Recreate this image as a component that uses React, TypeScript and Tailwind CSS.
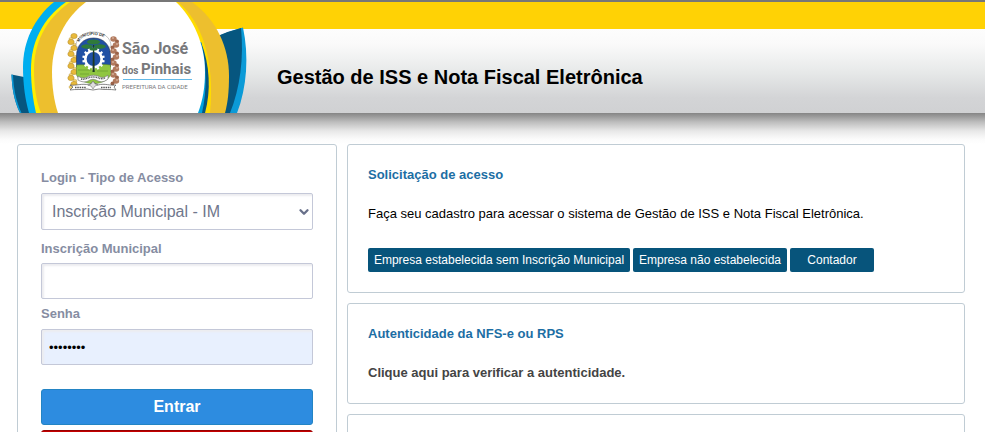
import React from "react";
import { ChevronDown } from "lucide-react";

const sans = "font-['Liberation_Sans',Arial,sans-serif]";

function Emblem() {
  const teeth = Array.from({ length: 14 }, (_, i) => (i * 360) / 14);
  const leaves = [36, 42, 48, 54, 60, 66, 72, 78, 84];
  return (
    <g>
      {leaves.map((y, i) => (
        <g key={y}>
          <ellipse cx={i % 2 ? 71 : 74} cy={y} rx="3.2" ry="2.6" fill="#e8b93a" stroke="#b08a34" strokeWidth=".5" />
          <ellipse cx={i % 2 ? 75 : 71} cy={y + 3} rx="2" ry="1.6" fill="#f3d36a" stroke="#b08a34" strokeWidth=".4" />
        </g>
      ))}
      {leaves.slice(0, 8).map((y, i) => (
        <g key={y}>
          <ellipse cx={i % 2 ? 116 : 113.5} cy={y + 3} rx="3.2" ry="2.8" fill="#b27a5e" />
          <circle cx={i % 2 ? 112.5 : 117} cy={y + 5.5} r="2" fill="#9a6248" />
          <circle cx={i % 2 ? 117 : 113} cy={y + 2} r=".8" fill="#e9cdbd" />
        </g>
      ))}
      <path d="M76 46c0-8 7-14 17.500-14S111 38 111 46l-3 2H79z" fill="#fff" stroke="#888" strokeWidth=".5" />
      <path d="M76.500 67V56c0-11 7-18 17-18s17 7 17 18v11z" fill="#2050a4" stroke="#24324d" strokeWidth=".6" />
      <path d="M76.500 65c7-1 12 1 17 0s11-1 17 0v10c-3 6-9 8-17 9-8-1-14-3-17-9z" fill="#8fc640" stroke="#527b2a" strokeWidth=".5" />
      <path d="M78 70h13M97 71h11M80 74h9" stroke="#679c31" strokeWidth=".7" />
      <path id="emblem-arc" d="M79 42c2-5 7-7 14.500-7s13 3 15 7" fill="none" />
      <text fontSize="4" fontWeight="700" fill="#333" className={sans}>
        <textPath href="#emblem-arc">MUNICÍPIO DE</textPath>
      </text>
      <circle cx="93.500" cy="59" r="8.200" fill="#2050a4" stroke="#fff" strokeWidth="2.600" />
      {teeth.map((a) => (
        <rect key={a} x="92.400" y="47.700" width="2.200" height="2.600" fill="#fff" transform={`rotate(${a} 93.5 59)`} />
      ))}
      <path d="M93 45h1.200l.5 27h-2.200z" fill="#1e3a22" />
      <g fill="#2f7a3a">
        <ellipse cx="93.500" cy="42" rx="6.500" ry="2.400" />
        <ellipse cx="87" cy="46.500" rx="5.800" ry="2.200" />
        <ellipse cx="100" cy="46.500" rx="5.800" ry="2.200" />
        <ellipse cx="93.500" cy="49" rx="4" ry="1.600" />
      </g>
      <path d="M78 76c4 3 8 2 11 0 3-1 6-1 9 0 3 2 7 2 10-1v4c-5 4-8 3-12 1-2-1-4-1-6 0-5 3-8 2-12 0z" fill="#fff" stroke="#777" strokeWidth=".7" />
      <path d="M81 79c5 1 6-2 12-2s7 3 12 1" fill="none" stroke="#555" strokeWidth="1.500" strokeDasharray="1 .7" />
      <path d="M70 85c6 1 12-2 19 0l4-3 5 3c7-2 12 1 18 0l-2 2 2 3c-6-1-12 0-17-1l-6 1-6-1c-5 1-11 0-17 1l3-3z" fill="#fff" stroke="#555" strokeWidth=".7" />
      <path d="M75 87.500h11M101 87.500h10" stroke="#555" strokeWidth="1.400" strokeDasharray="1.500 .8" />
      <path d="m93 81 2 3 3 1-3 1-2 3-2-3-3-1 3-1z" fill="#ddd" stroke="#666" strokeWidth=".5" />
    </g>
  );
}

function Brand() {
  return (
    <svg
      viewBox="0 2 250 111"
      role="img"
      aria-label="São José dos Pinhais - Prefeitura da Cidade"
      className="h-[111px] w-[250px] shrink-0"
    >
      <path d="M11.500 74.500 24 77 40 113H20C14 101 12 88 11.500 74.500z" fill="#06567f" />
      <path d="M11.500 74.500C12 88 14 101 20 113h1.500C16 101 13.500 88 13 75z" fill="#0b9ad7" />
      <path d="M54 2C34 18 23 42 23 67c0 17 2 32 6 46h51V2z" fill="#00aeef" />
      <path d="M214 38c10-5 19-7.500 29-10.500 6 28 4 60-6 85.500h-17z" fill="#0b9ad7" />
      <path d="M214 38c9-5 18-7.500 27-10 3 30-1 60-11 85h-10z" fill="#06567f" />
      <path d="M66 2C42 19 31 43 31 69c0 16 2 31 5 44h50V2z" fill="#ffee00" />
      <path d="M70 2C45 20 34 43 34 70c0 16 2 31 7 43h184c3-11 4-23 4-37 0-28-12-56-37-74z" fill="#edbf2e" />
      <path d="M174 2h4c24 20 37 58 32 111h-10z" fill="#ffdc00" />
      <path d="M201 42c9 23 10 49 4 71h-8V42z" fill="#06567f" />
      <path d="M201 42c6 22 6 49 1 71h-8V42z" fill="#00a4df" />
      <path d="M86 2C66 17 52 42 52 72c0 15 2 29 6 41h140c5-13 7-27 7-41 0-28-12-54-29-70z" fill="#fff" />
      <Emblem />
      <g fill="#77787b" className="font-[Roboto,sans-serif]">
        <text x="122" y="54" fontSize="16" fontWeight="700">São José</text>
        <text x="122" y="74" fontSize="10" fontWeight="700">dos</text>
        <text x="141" y="74" fontSize="15" fontWeight="700">Pinhais</text>
        <text x="122" y="89" fontSize="6">PREFEITURA DA CIDADE</text>
      </g>
      <path d="M123 79.500h69" stroke="#62b9e8" />
    </svg>
  );
}

const label = "block text-[13px] leading-4 font-bold text-[#868da2]";
const field =
  "block w-full rounded-xs border border-[#c4c8d8] text-[#000] shadow-[inset_2px_2px_2px_#ececf0] outline-none";

function Card({ children, className = "" }: { children?: React.ReactNode; className?: string }) {
  return <section className={`rounded-[3px] border border-[#c0ccd4] bg-white ${className}`}>{children}</section>;
}

function Action({ children, className = "" }: { children: React.ReactNode; className?: string }) {
  return (
    <button
      type="button"
      className={`h-6 rounded-xs bg-[#07547b] px-[5px] text-xs leading-6 whitespace-nowrap text-white ${className}`}
    >
      {children}
    </button>
  );
}

export default function App() {
  return (
    <div className={`h-screen overflow-hidden bg-white text-black ${sans}`}>
      <header className="border-t-2 border-[#777] bg-[linear-gradient(#ffd205_27px,#fdfdfd_27px,#fafafa_42px,#e7e9e9_70px,#d3d4d6_96px,#d0d1d3)]">
        <div className="flex items-start gap-[27px]">
          <Brand />
          <h1 className="pt-[63px] text-xl leading-6 font-bold">Gestão de ISS e Nota Fiscal Eletrônica</h1>
        </div>
      </header>
      <div className="h-[31px] bg-[linear-gradient(#858585,#bdbdbd_9px,#e8e8e8_18px,#fbfbfb_26px,#fff)]" />

      <main className="flex gap-[10px] pr-5 pl-[17px]">
        <Card className="w-80 shrink-0 px-[23px] pt-[25px] pb-8">
          <form onSubmit={(e) => e.preventDefault()}>
            <label htmlFor="tipo" className={label}>Login - Tipo de Acesso</label>
            <div className="relative mt-[7px]">
              <select
                id="tipo"
                className={`${field} h-[37px] appearance-none bg-white pl-[10px] text-base text-[#70778c]`}
              >
                <option>Inscrição Municipal - IM</option>
              </select>
              <ChevronDown
                size={14}
                strokeWidth={4}
                className="pointer-events-none absolute top-[12px] right-[2px] text-[#68708a]"
              />
            </div>
            <label htmlFor="inscricao" className={`${label} mt-[11px]`}>Inscrição Municipal</label>
            <input id="inscricao" type="text" className={`${field} mt-[6px] h-9 px-[7px] text-base`} />
            <label htmlFor="senha" className={`${label} mt-[7px]`}>Senha</label>
            <input
              id="senha"
              type="password"
              defaultValue="12345678"
              className={`${field} mt-[7px] h-9 bg-[#e8f0fe] px-[7px] text-[13px]`}
            />
            <button
              type="submit"
              className="mt-6 block h-9 w-full rounded-[3px] border border-[#2384c4] bg-[#2d8ce0] text-base font-bold text-white"
            >
              Entrar
            </button>
            <button
              type="button"
              className="mt-[5px] block h-9 w-full rounded-[3px] border border-[#900] bg-[#c40000]"
            />
          </form>
        </Card>

        <div className="flex min-w-0 flex-1 flex-col gap-[10px]">
          <Card className="px-5 pt-[22px] pb-5">
            <h2 className="text-[13px] leading-4 font-bold text-[#1c6ea4]">Solicitação de acesso</h2>
            <p className="mt-[23px] text-[13px] leading-4">
              Faça seu cadastro para acessar o sistema de Gestão de ISS e Nota Fiscal Eletrônica.
            </p>
            <div className="mt-[26px] flex gap-[3px]">
              <Action className="w-[262px]">Empresa estabelecida sem Inscrição Municipal</Action>
              <Action className="w-[154px]">Empresa não estabelecida</Action>
              <Action className="w-[84px]">Contador</Action>
            </div>
          </Card>
          <Card className="px-5 pt-[22px] pb-[22px]">
            <h2 className="text-[13px] leading-4 font-bold text-[#1c6ea4]">Autenticidade da NFS-e ou RPS</h2>
            <a href="#autenticidade" className="mt-[23px] block text-[13px] leading-4 font-bold text-[#444]">
              Clique aqui para verificar a autenticidade.
            </a>
          </Card>
          <Card className="flex-1" />
        </div>
      </main>
    </div>
  );
}
